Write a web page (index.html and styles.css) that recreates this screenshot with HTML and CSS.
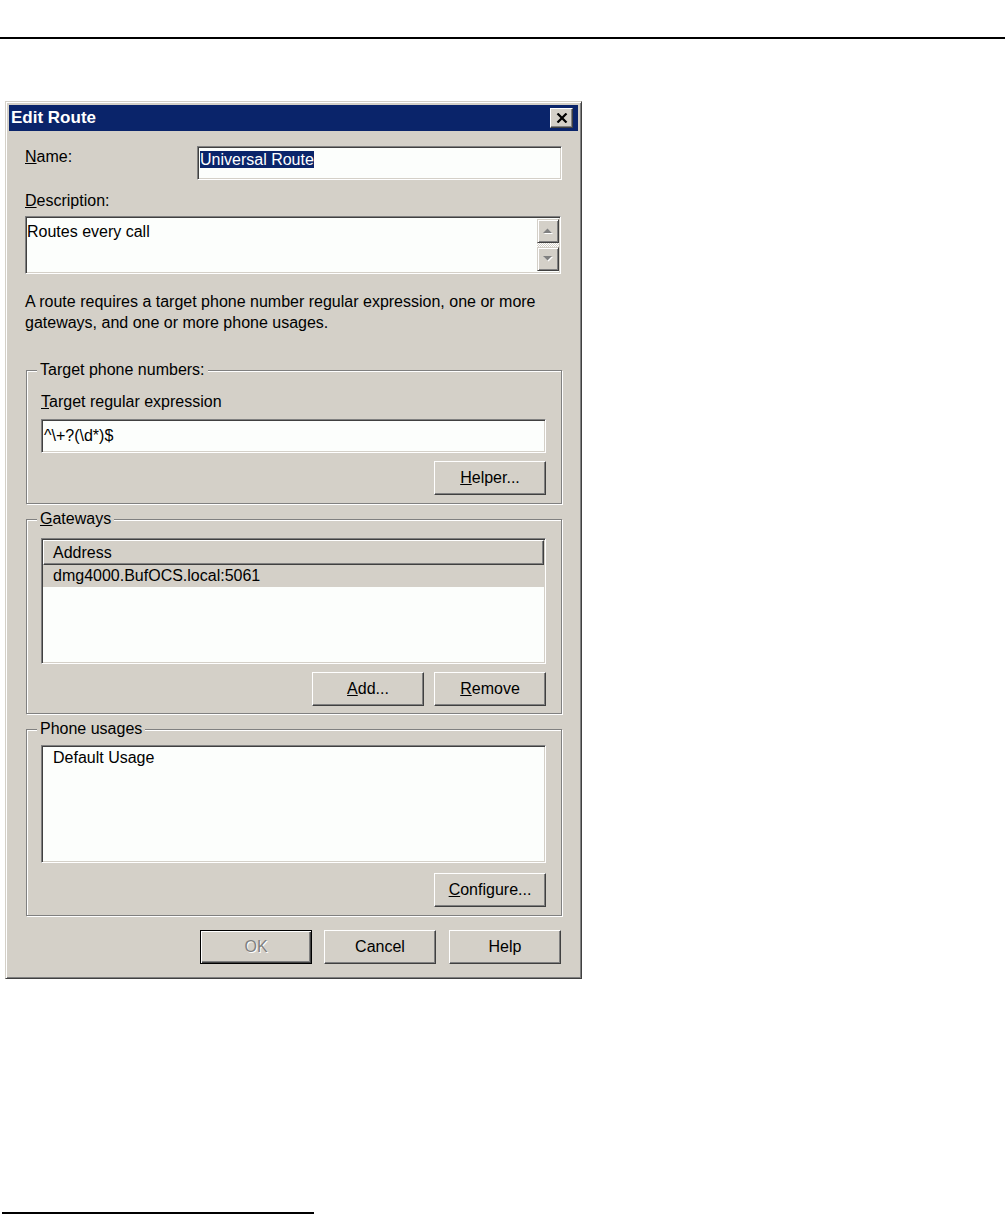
FILE: index.html
```html
<!DOCTYPE html>
<html lang="en">
<head>
    <meta charset="UTF-8">
    <meta name="viewport" content="width=device-width, initial-scale=1.0">
    <title>Edit Route</title>
    <link rel="stylesheet" href="styles.css">
</head>
<body>
    <div class="rule-top"></div>

    <div class="dialog">
        <div class="titlebar">
            <span class="title">Edit Route</span>
            <span class="close-btn">
                <svg width="12" height="10" viewBox="0 0 12 10"><path d="M1.5 0.5 L10.5 9.5 M10.5 0.5 L1.5 9.5" stroke="#000" stroke-width="2.2" fill="none"/></svg>
            </span>
        </div>

        <div class="content">
            <div class="name-row">
                <div class="label name-label"><u>N</u>ame:</div>
                <div class="field name-field"><span class="selected">Universal Route</span></div>
            </div>

            <div class="label desc-label"><u>D</u>escription:</div>
            <div class="field desc-field">
                <div class="desc-text">Routes every call</div>
                <div class="scrollbar">
                    <div class="sb-btn">
                        <svg width="12" height="8" viewBox="0 0 12 8"><polygon points="1,6 10,6 5.5,1.5" fill="#fff" transform="translate(1,1)"/><polygon points="1,6 10,6 5.5,1.5" fill="#808080"/></svg>
                    </div>
                    <div class="sb-track"></div>
                    <div class="sb-btn">
                        <svg width="12" height="8" viewBox="0 0 12 8"><polygon points="1,1 10,1 5.5,5.5" fill="#fff" transform="translate(1,1)"/><polygon points="1,1 10,1 5.5,5.5" fill="#808080"/></svg>
                    </div>
                </div>
            </div>

            <p class="info">A route requires a target phone number regular expression, one or more<br>gateways, and one or more phone usages.</p>

            <div class="group group-target">
                <div class="legend">Target phone numbers:</div>
                <div class="label regex-label"><u>T</u>arget regular expression</div>
                <div class="field regex-field">^\+?(\d*)$</div>
                <div class="btn-row">
                    <button class="btn"><u>H</u>elper...</button>
                </div>
            </div>

            <div class="group group-gateways">
                <div class="legend"><u>G</u>ateways</div>
                <div class="field listview">
                    <div class="lv-header">Address</div>
                    <div class="lv-row">dmg4000.BufOCS.local:5061</div>
                </div>
                <div class="btn-row">
                    <button class="btn"><u>A</u>dd...</button>
                    <button class="btn"><u>R</u>emove</button>
                </div>
            </div>

            <div class="group group-usages">
                <div class="legend">Phone usages</div>
                <div class="field listbox">
                    <div class="lb-item">Default Usage</div>
                </div>
                <div class="btn-row">
                    <button class="btn"><u>C</u>onfigure...</button>
                </div>
            </div>

            <div class="dialog-buttons">
                <button class="btn btn-default" disabled>OK</button>
                <button class="btn btn-cancel">Cancel</button>
                <button class="btn btn-help">Help</button>
            </div>
        </div>
    </div>

    <div class="rule-bottom"></div>
</body>
</html>
```

FILE: styles.css
```css
body {
    margin: 0;
    font-family: "Liberation Sans", Arial, sans-serif;
    font-size: 16px;
    color: #000;
    background: #fff;
}
.rule-top {
    height: 2px;
    background: #000;
    margin: 37px 3px 0 0;
}
.rule-bottom {
    width: 312px;
    height: 2px;
    background: #000;
    margin: 233px 0 0 2px;
}

/* window frame */
.dialog {
    width: 577px;
    box-sizing: border-box;
    margin: 62px 0 0 5px;
    padding: 3px;
    background: #d4d0c8;
    border: 1px solid;
    border-color: #d4d0c8 #404040 #404040 #d4d0c8;
    box-shadow: inset 1px 1px #fff, inset -1px -1px #808080;
}
.titlebar {
    height: 26px;
    background: #0a246a;
    color: #fff;
    display: flex;
    align-items: center;
    justify-content: space-between;
    padding-left: 2px;
    font-weight: bold;
    font-size: 17px;
}
.close-btn {
    width: 23px;
    height: 20px;
    box-sizing: border-box;
    margin-right: 5px;
    background: #d4d0c8;
    border: 1px solid;
    border-color: #fff #404040 #404040 #fff;
    box-shadow: inset -1px -1px #808080;
    display: flex;
    align-items: center;
    justify-content: center;
}
.content {
    padding: 0 16px 11px;
}
.label {
    line-height: 21px;
}

/* sunken edit fields */
.field {
    box-sizing: border-box;
    background: #fcfefc;
    border: 1px solid;
    border-color: #808080 #fff #fff #808080;
    box-shadow: inset 1px 1px #404040, inset -1px -1px #d4d0c8;
}
.name-row {
    display: flex;
    align-items: flex-start;
    margin-top: 15px;
}
.name-label {
    width: 172px;
}
.name-field {
    flex: 1;
    height: 34px;
    padding: 4px 2px 0 2px;
}
.selected {
    background: #0a246a;
    color: #fff;
}
.desc-label {
    margin-top: 10px;
}
.desc-field {
    display: flex;
    height: 58px;
    margin: 5px 1px 0 0;
    padding: 2px 1px;
}
.desc-text {
    flex: 1;
    padding-top: 2px;
    line-height: 21px;
}
.scrollbar {
    width: 22px;
    display: flex;
    flex-direction: column;
}
.sb-btn {
    height: 24px;
    box-sizing: border-box;
    background: #d4d0c8;
    border: 1px solid;
    border-color: #d4d0c8 #404040 #404040 #d4d0c8;
    box-shadow: inset 1px 1px #fff, inset -1px -1px #808080;
    display: flex;
    align-items: center;
    justify-content: center;
}
.sb-track {
    flex: 1;
    background: repeating-conic-gradient(#fff 0 25%, #d4d0c8 0 50%) 0 0 / 2px 2px;
}
.info {
    margin: 17px 0 0;
    line-height: 21px;
    white-space: nowrap;
}

/* group boxes */
.group {
    margin: 0 0 0 1px;
    padding: 0 15px 7px 14px;
    border: 1px solid #808080;
    box-shadow: inset 1px 1px #fff, 1px 1px #fff;
}
.legend {
    width: fit-content;
    margin: -12px 0 0 -4px;
    padding: 0 3px;
    background: #d4d0c8;
    line-height: 21px;
}
.group-target {
    margin-top: 37px;
    padding-bottom: 8px;
}
.regex-label {
    margin-top: 11px;
}
.regex-field {
    height: 34px;
    margin-top: 7px;
    padding: 5px 2px 0;
    line-height: 21px;
}
.group-gateways {
    margin-top: 15px;
}
.listview {
    height: 126px;
    margin-top: 9px;
    padding: 1px;
}
.lv-header {
    height: 25px;
    box-sizing: border-box;
    background: #d4d0c8;
    border: 1px solid;
    border-color: #fff #404040 #404040 #fff;
    box-shadow: inset -1px -1px #808080;
    padding-left: 9px;
    line-height: 23px;
}
.lv-row {
    height: 22px;
    line-height: 22px;
    background: #d4d0c8;
    padding-left: 10px;
}
.group-usages {
    margin-top: 15px;
    padding-bottom: 8px;
}
.listbox {
    height: 118px;
    margin-top: 6px;
    padding: 1px;
}
.lb-item {
    padding-left: 10px;
    line-height: 21px;
}
.group-usages .btn-row {
    margin-top: 10px;
}

/* push buttons */
.btn-row {
    display: flex;
    justify-content: flex-end;
    gap: 10px;
    margin-top: 8px;
}
.btn {
    width: 112px;
    height: 34px;
    box-sizing: border-box;
    padding: 0;
    font: inherit;
    color: #000;
    background: #d4d0c8;
    border: 1px solid;
    border-color: #fff #404040 #404040 #fff;
    box-shadow: inset -1px -1px #808080;
}
.dialog-buttons {
    display: flex;
    justify-content: flex-end;
    margin: 14px 1px 0 0;
}
.btn-default {
    border: 1px solid #000;
    box-shadow: inset 1px 1px #fff, inset -1px -1px #404040, inset -2px -2px #808080;
    color: #808080;
    text-shadow: 1px 1px 0 #fff;
}
.btn-cancel {
    margin-left: 12px;
}
.btn-help {
    margin-left: 13px;
}
```
